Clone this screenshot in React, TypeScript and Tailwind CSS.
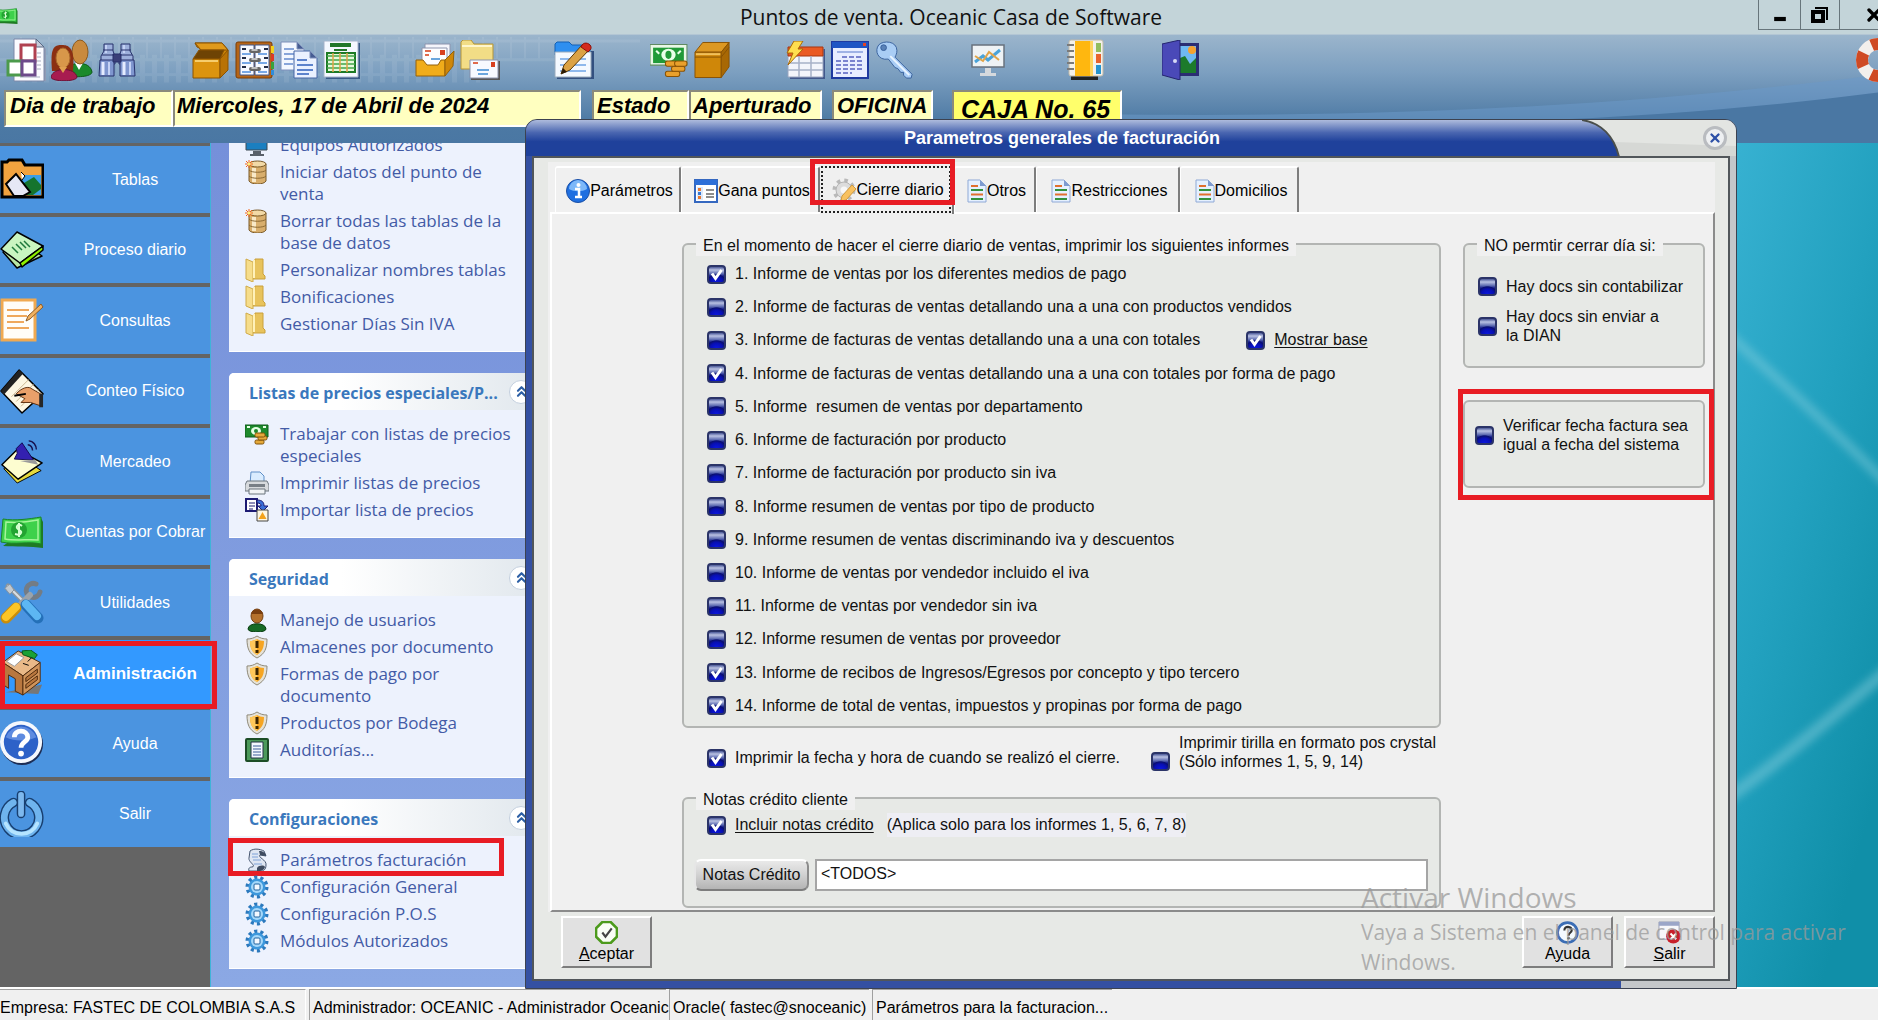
import React from "react";
import { ChevronsUp, Minus, X } from "lucide-react";

type Icon = (p: { className?: string }) => React.ReactElement;

const make = (viewBox: string, body: React.ReactNode): Icon =>
  function Drawn({ className = "" }) {
    return (
      <svg viewBox={viewBox} className={className} aria-hidden="true">
        {body}
      </svg>
    );
  };

/* ---------- toolbar icons ---------- */
const DocBlocks = make("0 0 40 46", (
  <>
    <path d="M10 4h22l8 8v32H10z" fill="#8f9bb5" />
    <path d="M8 2h22l8 8v34H8z" fill="#fbfbff" stroke="#7d88a8" />
    <path d="M30 2l8 8h-8z" fill="#c5cbd9" stroke="#5b6a85" />
    <path d="M31 16h4M31 20h4M31 24h4M31 28h4M31 32h4M14 40h20" stroke="#a9adc0" />
    <rect x="15" y="8" width="14" height="16" fill="#fff" stroke="#b04050" strokeWidth="3" />
    <rect x="2" y="24" width="14" height="14" fill="#fff" stroke="#4c9a4c" strokeWidth="3" />
    <rect x="16" y="24" width="13" height="14" fill="#fff" stroke="#6d4a8a" strokeWidth="3" />
  </>
));
const People = make("0 0 42 42", (
  <>
    <path d="M17 30c1-7 22-9 24 3 0 5-18 6-24 3z" fill="#1b8a2b" stroke="#0d5a18" />
    <path d="M24 24l4 7 4-7z" fill="#fff" />
    <ellipse cx="29" cy="13" rx="8" ry="12" fill="#c98a3e" stroke="#8a5a1f" />
    <path d="M1 32C-1 8 3 6 11 6s13 4 11 26z" fill="#8c2f12" />
    <ellipse cx="12" cy="19" rx="7" ry="10" fill="#d8974a" stroke="#a8672a" />
    <path d="M0 38c2-10 24-10 26 0 0 5-26 5-26 0z" fill="#a81c50" stroke="#6e0f33" />
    <path d="M8 28l4 6 4-6z" fill="#e0a050" />
  </>
));
const Binoculars = make("0 0 38 36", (
  <g stroke="#27316b">
    <path d="M6 2h9v7l2 5v8H3v-8l3-5zM23 2h9v7l3 5v8H21v-8l2-5z" fill="#9db0dc" />
    <path d="M2 18h14v16H1zM22 18h14l1 16H22z" fill="#7f96cf" />
    <path d="M5 20v13M26 20v13" stroke="#e5ecff" strokeWidth="3" />
    <path d="M11 20v13M32 20v13M8 3v8M26 3v8" stroke="#c4d2f5" strokeWidth="2" />
    <path d="M15 12h8v8h-8z" fill="#3a3f78" />
    <path d="M4 13h12M22 13h12M5 8h10M23 8h10" />
  </g>
));
const OpenBox = make("0 0 38 38", (
  <g stroke="#8a5203" strokeLinejoin="round">
    <path d="M3 2h27l6 7-1 20-7 8V17L5 6z" fill="#c98207" />
    <path d="M3 2h27l6 7H9z" fill="#e09a1c" />
    <path d="M7 9h25l-4 9H1z" fill="#6e4304" />
    <path d="M1 18h27v19H1z" fill="#dc940f" />
    <path d="M28 18l8-9v20l-8 8z" fill="#b87205" />
    <path d="M3 20h23" stroke="#f6cd6c" strokeWidth="2" />
  </g>
));
const ClosedBox = make("0 0 38 38", (
  <g stroke="#8a5203" strokeLinejoin="round">
    <path d="M1 11L9 1h27l-8 10z" fill="#dd9822" />
    <path d="M1 11h27v26H1z" fill="#cf8709" />
    <path d="M28 11l8-10v25l-8 11z" fill="#a86804" />
    <path d="M1 16h27l8-10" fill="none" />
    <path d="M2 13h25" stroke="#f1c05c" strokeWidth="2" />
  </g>
));
const Planner = make("0 0 40 38", (
  <>
    <rect x="1" y="1" width="36" height="36" rx="2" fill="#b56416" stroke="#7a3d06" />
    <path d="M36 5h3v7h-3z" fill="#f2d21f" />
    <path d="M36 13h3v7h-3z" fill="#dc3a26" />
    <path d="M36 21h3v7h-3z" fill="#37a23b" />
    <path d="M36 29h3v5h-3z" fill="#2f8ddb" />
    <path d="M5 4h14v30H5zM20 4h14v30H20z" fill="#f7f9ff" stroke="#42598c" />
    <path d="M7 8h4M29 8h4M7 17h4M29 17h4M7 26h4M29 26h4" stroke="#222b44" strokeWidth="2" />
    <path d="M7 13h9M23 13h9M7 22h9M23 22h9M7 31h9M23 31h9" stroke="#78a8e6" strokeWidth="2" />
    <path d="M16 10h8M16 19h8M16 28h8" stroke="#666" strokeWidth="4" strokeLinecap="round" />
    <path d="M17 9h5M17 18h5M17 27h5" stroke="#ddd" strokeWidth="1.500" strokeLinecap="round" />
  </>
));
const CopyDocs = make("0 0 38 38", (
  <g stroke="#7e90bb" strokeLinejoin="round">
    <path d="M1 1h16l7 7v21H1z" fill="#f3f7ff" />
    <path d="M17 1l7 7h-7z" fill="#465c92" />
    <path d="M4 8h10M4 13h12M4 18h10M4 23h9" stroke="#88a5da" strokeWidth="2" />
    <path d="M14 10h16l7 7v20H14z" fill="#eaf1ff" stroke="#4766a5" />
    <path d="M30 10l7 7h-7z" fill="#465c92" />
    <path d="M17 19h10M17 24h16M17 29h16M17 33h12" stroke="#5d83cc" strokeWidth="2" />
  </g>
));
const SheetGreen = make("0 0 36 38", (
  <>
    <path d="M2 2h34v36H2z" fill="#385a86" />
    <path d="M0 0h34v36H0z" fill="#f4f8ff" stroke="#a5b2c9" />
    <path d="M6 4h21" stroke="#22772a" strokeWidth="4" />
    <path d="M10 9h13" stroke="#22772a" strokeWidth="2" />
    <path d="M3 12h28v19H3z" fill="#e6f9dc" stroke="#1d7a25" strokeWidth="2" />
    <path d="M3 15h28M3 19h28M3 23h28M3 27h28" stroke="#43a549" strokeWidth="1.5" />
    <path d="M9 12v19M16 12v19M23 12v19" stroke="#e0a345" strokeWidth="1.5" />
  </>
));
const MailTray = make("0 0 40 34", (
  <>
    <path d="M10 1h25v18H10z" fill="#f5f5fb" stroke="#8d94ad" />
    <path d="M7 5h25v18H7z" fill="#fdfdff" stroke="#8d94ad" />
    <path d="M25 7h5v5h-5z" fill="#d8401f" />
    <path d="M10 8h6M10 12h4" stroke="#e06a4c" strokeWidth="2" />
    <path d="M16 16h9" stroke="#6aa5dd" strokeWidth="2" />
    <path d="M1 17h7l4 5h11l3-5h4v16H1z" fill="#f0ac1a" stroke="#94610a" />
    <path d="M30 17l9-9-1 15-8 10z" fill="#cf8709" stroke="#94610a" />
  </>
));
const FolderMail = make("0 0 40 40", (
  <>
    <path d="M1 2l2-2h8l3 4h19v25H1z" fill="#f2dd86" stroke="#b3953a" />
    <path d="M2 6h30" stroke="#fff6cb" strokeWidth="2" />
    <path d="M11 21h29v19H11z" fill="#555" />
    <path d="M10 20h28v18H10z" fill="#f7f9ff" stroke="#8d94ad" />
    <path d="M31 22h4v5h-4z" fill="#d8401f" />
    <path d="M13 23h5" stroke="#e06a4c" strokeWidth="2" />
    <path d="M17 30h12M18 34h10" stroke="#6aa5dd" strokeWidth="2" />
  </>
));
const FolderPencil = make("0 0 40 38", (
  <>
    <path d="M3 10h37v28H3z" fill="#33507f" />
    <path d="M1 3l2-2h12l3 3h18v10H1z" fill="#2e8ff0" stroke="#1461b4" />
    <path d="M1 11h36v25H1z" fill="#f4f9ff" stroke="#9ab" />
    <path d="M6 18h26M6 24h26M6 30h26" stroke="#8fb9ec" strokeWidth="2" />
    <path d="M28 4l7 5-19 20-9 4 3-9z" fill="#dba244" stroke="#5c3a07" />
    <path d="M7 33l2-6 4 4z" fill="#2b1a05" />
    <path d="M28 4c4-5 12 1 8 5l-2 2-7-5z" fill="#d52a1e" stroke="#8d120a" />
  </>
));
const Money = make("0 0 38 32", (
  <>
    <path d="M0 1h36v20H0z" fill="#e9f7e6" stroke="#5f8a62" />
    <path d="M3 4h30v15H3z" fill="#219a38" />
    <ellipse cx="18" cy="11" rx="7" ry="6" fill="#e9ffe8" />
    <ellipse cx="18" cy="11" rx="3" ry="4" fill="#219a38" />
    <path d="M6 7l3 3M30 7l-3 3" stroke="#e9ffe8" strokeWidth="2" />
    <g fill="#e9a02c" stroke="#8a5203">
      <rect x="15" y="27" width="14" height="5" rx="2" />
      <rect x="21" y="22" width="13" height="5" rx="2" />
      <rect x="15" y="17" width="11" height="5" rx="2" />
      <rect x="24" y="17" width="12" height="5" rx="2" />
    </g>
  </>
));
const TableFlash = make("0 0 40 38", (
  <>
    <path d="M5 8h35v30H5z" fill="#42598c" />
    <path d="M3 6h35v30H3z" fill="#f3f5fb" stroke="#9aa5bf" />
    <path d="M3 6h35v9H3z" fill="#ea5a23" stroke="#a73711" />
    <path d="M3 22h35M3 29h35M14 15v21M26 15v21" stroke="#a7b1c8" strokeWidth="1.5" />
    <path d="M9 0h9l-5 8h5L3 24l5-12H2z" fill="#ffdf4f" stroke="#a8690a" />
  </>
));
const WindowList = make("0 0 38 38", (
  <>
    <path d="M1 1h36v36H1z" fill="#e8edff" stroke="#1f3aa0" strokeWidth="2" />
    <path d="M1 1h36v6H1z" fill="#1f55c4" />
    <path d="M32 2h3v3h-3z" fill="#e04426" />
    <path d="M6 11h26" stroke="#9fb2e5" strokeWidth="2" />
    <path d="M11 16h20M5 20h28M5 24h28M5 28h28M5 32h16" stroke="#7a83cf" strokeWidth="2" strokeDasharray="5 2" />
  </>
));
const KeyIcon = make("0 0 40 40", (
  <g stroke="#38609c" strokeLinejoin="round">
    <path d="M3 4C8-1 22 0 22 10c0 3-1 5-2 7l18 18-1 4h-5l-3-3v-3h-3l-3-4-3-1-7-9C2 21-2 10 3 4z" fill="#a9cdf5" />
    <circle cx="8" cy="7" r="3" fill="#5a82b8" />
    <path d="M15 16l20 20" stroke="#eaf5ff" strokeWidth="2" />
  </g>
));
const MonitorChart = make("0 0 34 32", (
  <>
    <rect x="1" y="1" width="32" height="22" fill="#eef2f5" stroke="#68727d" strokeWidth="1.500" />
    <path d="M4 18l8-6 5 4 12-10" stroke="#4aa3d9" strokeWidth="3" fill="none" />
    <path d="M4 12l8 5 6-9 10 8" stroke="#e2a448" strokeWidth="2" fill="none" />
    <path d="M14 24h6v5h5v3H9v-3h5z" fill="#d5d9dd" />
  </>
));
const NotebookColor = make("0 0 38 42", (
  <>
    <path d="M5 37h27v4H5z" fill="#222" />
    <rect x="3" y="1" width="34" height="36" rx="2" fill="#f4f1ea" stroke="#c0b9a8" />
    <path d="M9 2h18v35H9z" fill="#ffb70f" />
    <path d="M24 2h3v35h-3z" fill="#ffd45c" />
    <path d="M30 4h5v9h-5z" fill="#92bd5e" />
    <path d="M30 15h5v9h-5z" fill="#e8632c" />
    <path d="M30 26h5v9h-5z" fill="#2694ce" />
    <path d="M1 6h7M1 12h7M1 18h7M1 24h7M1 30h7" stroke="#7a7a7a" strokeWidth="2" />
  </>
));
const DoorPicture = make("0 0 38 40", (
  <>
    <path d="M14 3h23v33H14z" fill="#2b2d73" />
    <path d="M18 6h16v27H18z" fill="#6fb8f2" />
    <circle cx="30" cy="10" r="4" fill="#f5a12f" />
    <path d="M18 18l5-2 5 8 6-6v15H18z" fill="#1c7a2b" />
    <path d="M0 4l18-4v40L0 35z" fill="#4a49b8" stroke="#25246f" />
    <circle cx="13" cy="21" r="2" fill="#d6d9f5" />
  </>
));
const Lifebuoy = make("0 0 46 46", (
  <>
    <circle cx="23" cy="23" r="16" fill="none" stroke="#f3efec" strokeWidth="12" />
    <circle cx="23" cy="23" r="16" fill="none" stroke="#cf4a24" strokeWidth="12" strokeDasharray="14 11.13" strokeDashoffset="7" />
  </>
));

/* ---------- sidebar icons ---------- */
const FolderPictures = make("0 0 44 40", (
  <>
    <path d="M2 38V3h5l2-2h13l3 5h18v32z" fill="#f2a33f" stroke="#000" strokeWidth="3" />
    <path d="M22 16h19v20H22z" fill="#3c9ee6" />
    <path d="M22 36l2-12 10-6 7 8v4l-8 6z" fill="#15742d" />
    <path d="M6 25l10-10 14 18-7 4H14z" fill="#e6e8f5" stroke="#000" strokeWidth="2" />
    <path d="M21 13l4 4-3 4" fill="#fff" stroke="#000" />
  </>
));
const Papers = make("0 0 44 38", (
  <g stroke="#000" strokeWidth="1.5" strokeLinejoin="round">
    <path d="M3 21l17-12 22 16-25 12z" fill="#b9e7a4" />
    <path d="M1 18L17 1l26 14-23 17z" fill="#c9f5c0" />
    <path d="M20 32l23-17v4L22 36z" fill="#8ef000" />
    <path d="M12 16l6 6M16 13l6 6M20 11l6 6M24 10l6 6" stroke="#1e7a3c" />
  </g>
));
const NotePencil = make("0 0 44 44", (
  <>
    <path d="M2 2h33v40H2z" fill="#fffdf8" stroke="#f0a951" strokeWidth="3" />
    <path d="M7 12h22M7 18h20M7 24h17M7 30h22" stroke="#efa85c" strokeWidth="2" />
    <path d="M41 6l2 3-13 12-4 2 2-5z" fill="#f0b05f" stroke="#8d5d2a" />
  </>
));
const HandWriting = make("0 0 46 48", (
  <g strokeLinejoin="round">
    <path d="M1 24L20 2l25 25-22 20z" fill="#fdf7e4" stroke="#000" strokeWidth="1.5" />
    <path d="M1 24L20 2l4 4L4 28z" fill="#222" />
    <path d="M12 30l18-18M17 35l18-18M22 40l18-18" stroke="#c8b58e" />
    <path d="M17 27c5-6 12-8 15-6l12 7v12l-12-4H22l4-4z" fill="#e9a06a" stroke="#5c2c0c" />
    <path d="M15 29l12-2" stroke="#000" strokeWidth="2" />
    <path d="M41 27h4v14h-4z" fill="#262626" />
  </g>
));
const Megaphone = make("0 0 44 48", (
  <g strokeLinejoin="round">
    <path d="M3 32l18-12 21 14-25 13z" fill="#e5d93c" stroke="#000" />
    <path d="M1 28l16-16 26 14-25 17z" fill="#fdfdd0" stroke="#000" strokeWidth="1.5" />
    <path d="M22 5l12 18-20-1 3-6-1-5z" fill="#3320b0" stroke="#120a52" />
    <path d="M28 7c3 0 5 3 5 6M29 3c5 0 8 5 8 9" stroke="#17124f" strokeWidth="1.5" fill="none" />
    <path d="M20 24l16-1 3 5z" fill="#9b9b9b" />
  </g>
));
const Banknote = make("0 0 44 32", (
  <>
    <path d="M3 30c12 1 28 0 40 2V6L41 2z" fill="#1f7a23" />
    <path d="M3 3c12 2 26 0 38-2v27c-12-3-26 1-40-2z" fill="#3ed14b" stroke="#1a8527" />
    <path d="M6 6c10 1 22 0 32-2v20c-10-1-22 1-33-1z" fill="none" stroke="#a6f59b" strokeWidth="1.5" />
    <circle cx="19" cy="14" r="8" fill="#22a431" />
    <path d="M22 10c-4-3-7 1-4 3s5 3 1 6l-4-1M19 7v14" stroke="#d5ffd0" strokeWidth="2" fill="none" />
  </>
));
const Tools = make("0 0 44 44", (
  <g strokeLinecap="round">
    <path d="M8 6l20 20" stroke="#8b959e" strokeWidth="5" />
    <path d="M8 6l20 20" stroke="#d9dfe4" strokeWidth="2" />
    <path d="M5 8l5-4 4 6-4 4z" fill="#c3cad0" stroke="#8b959e" />
    <path d="M36 4a7 7 0 1 0 4 8" stroke="#737c85" strokeWidth="5" fill="none" />
    <path d="M30 15L18 27" stroke="#9aa3ab" strokeWidth="6" />
    <path d="M16 28L6 38" stroke="#c98d0b" strokeWidth="11" />
    <path d="M16 27L6 37" stroke="#fcc527" strokeWidth="8" />
    <path d="M26 25l12 13" stroke="#2470b8" strokeWidth="11" />
    <path d="M26 24l11 12" stroke="#5db7f3" strokeWidth="8" />
  </g>
));
const Desk = make("0 0 42 48", (
  <g stroke="#4e2a0d" strokeLinejoin="round">
    <path d="M4 44l34 2 4-10z" fill="#777" stroke="none" />
    <path d="M1 13L17 1l23 12-18 14z" fill="#e9b988" />
    <path d="M1 13l21 14v20l-8-4V30l-7-4v14l-6-4z" fill="#b9773f" />
    <path d="M22 27l18-14v20L22 47z" fill="#cf935a" />
    <path d="M25 29l12-9v4l-12 9zM25 36l12-9v4l-12 9z" fill="#b9773f" />
    <path d="M5 12L15 4l8 4-10 9z" fill="#fff" stroke="#999" />
    <path d="M21 1l9-1 7 5-3 4-12-4z" fill="#1aa136" stroke="#0a571a" />
    <path d="M27 12l4-4M22 14l6 2" stroke="#000" />
  </g>
));
const HelpBig = make("0 0 46 48", (
  <>
    <circle cx="23" cy="25" r="22" fill="#1c2d55" />
    <circle cx="22" cy="23" r="22" fill="#f5f8fd" />
    <circle cx="22" cy="23" r="18" fill="#2d62c8" />
    <path d="M6 18a17 17 0 0 1 32 0c-8 4-22 5-32 0z" fill="#5e8be0" />
    <path d="M15 18c0-9 14-8 14 0 0 5-7 5-7 11" stroke="#fff" strokeWidth="5" fill="none" />
    <circle cx="22" cy="35" r="3" fill="#fff" />
  </>
));
const PowerBig = make("0 0 46 48", (
  <g fill="none" strokeLinecap="round">
    <path d="M14 12a18 18 0 1 0 17 0" stroke="#183f70" strokeWidth="10" />
    <path d="M14 12a18 18 0 1 0 17 0" stroke="#6fb4ee" strokeWidth="7" />
    <path d="M6 34a18 18 0 0 0 33 0" stroke="#b5e4ff" strokeWidth="4" />
    <path d="M22 4v20" stroke="#183f70" strokeWidth="9" />
    <path d="M22 4v20" stroke="#7db8ee" strokeWidth="6" />
  </g>
));

/* ---------- explorer icons ---------- */
const PcSmall = make("0 0 24 24", (
  <>
    <path d="M1 2h21v15H1z" fill="#1b7fc0" stroke="#3c4a55" />
    <path d="M8 18h8v3h3v2H5v-2h3z" fill="#596069" />
  </>
));
const Database = make("0 0 24 24", (
  <>
    <path d="M4 4v17c2 4 15 4 17 0V4z" fill="#d8ae6c" stroke="#7b5a28" />
    <path d="M9 8v14" stroke="#f9e9c7" strokeWidth="4" />
    <ellipse cx="12.500" cy="4" rx="8.500" ry="3" fill="#f2d9a6" stroke="#7b5a28" />
    <path d="M4 10c2 3 15 3 17 0M4 16c2 3 15 3 17 0" stroke="#8d6a33" fill="none" />
    <path d="M4 0v8M0 4h8M1 1l6 6M7 1L1 7" stroke="#f2641c" />
    <circle cx="4" cy="4" r="1.500" fill="#fff27a" />
  </>
));
const FolderOpen = make("0 0 24 24", (
  <>
    <path d="M10 1h8v15l2 2v3H8z" fill="#e8c35c" stroke="#caa03b" />
    <path d="M1 1l7 3v20l-7-3z" fill="#f6dd8b" stroke="#d0ab48" />
    <path d="M9 2v18" stroke="#fff1b9" strokeWidth="2" />
  </>
));
const MoneySmall = make("0 0 24 24", (
  <>
    <path d="M0 3h23v12H0z" fill="#1e8a2c" stroke="#0f5c1a" />
    <ellipse cx="11" cy="9" rx="5" ry="4" fill="#e6ffe4" />
    <ellipse cx="11" cy="9" rx="2" ry="2" fill="#1e8a2c" />
    <path d="M2 5h3M18 5h3" stroke="#e6ffe4" strokeWidth="2" />
    <g fill="#e5a93a" stroke="#805208">
      <rect x="10" y="18" width="9" height="4" rx="1.500" />
      <rect x="13" y="14" width="9" height="4" rx="1.500" />
      <rect x="10" y="11" width="10" height="4" rx="1.500" />
    </g>
  </>
));
const Printer = make("0 0 24 24", (
  <>
    <path d="M6 1h9l4 4v8H5z" fill="#d9ecff" stroke="#5f8fc8" />
    <path d="M2 10h20l2 4v6H0v-6z" fill="#d7dadd" stroke="#6b747c" />
    <path d="M4 13h16v3H4z" fill="#787f86" />
    <path d="M4 18h16v5H4z" fill="#f0f3f5" stroke="#6b747c" />
  </>
));
const ImportDoc = make("0 0 24 24", (
  <>
    <path d="M1 1h11v12H1z" fill="#fff" stroke="#1d1b73" strokeWidth="2" />
    <path d="M4 5h6M4 8h6M4 11h4" stroke="#1d1b73" />
    <path d="M12 2c6 0 7 3 7 6h4l-5 5-5-5h3c0-2-1-3-4-3z" fill="#3a6fd8" stroke="#1d1b73" />
    <path d="M12 12h11v11H12z" fill="#fdf6e0" stroke="#474747" />
    <path d="M17.500 14l4 7h-8z" fill="#f3a21b" />
  </>
));
const UserSmall = make("0 0 24 24", (
  <>
    <path d="M3 21c0-7 18-7 18 0 0 4-18 4-18 0z" fill="#176b25" stroke="#0a3d12" />
    <ellipse cx="12" cy="8" rx="6" ry="7" fill="#b5712c" stroke="#744012" />
    <path d="M6 6c1-6 11-6 12 0z" fill="#7a3f10" />
  </>
));
const Shield = make("0 0 24 24", (
  <>
    <path d="M12 1c3 2 6 3 10 3 0 9-2 15-10 19C4 19 2 13 2 4c4 0 7-1 10-3z" fill="#e5e2d8" stroke="#8f8a7a" />
    <path d="M12 4c2 1 4 2 7 2 0 7-2 11-7 14C7 17 5 13 5 6c3 0 5-1 7-2z" fill="#f6a522" />
    <path d="M12 4v16c-5-3-7-7-7-14 3 0 5-1 7-2z" fill="#ffc75a" />
    <path d="M12 6v7M12 15v3" stroke="#3c2500" strokeWidth="3" />
  </>
));
const Audit = make("0 0 24 24", (
  <>
    <rect x="1" y="1" width="22" height="22" rx="1" fill="#4c9a5a" stroke="#1c4d26" strokeWidth="2" />
    <path d="M6 4h12v16H6z" fill="#f4f8ff" stroke="#234" />
    <path d="M8 8h8M8 11h8M8 14h8M8 17h8" stroke="#3d5d99" />
  </>
));
const Scroll = make("0 0 24 24", (
  <>
    <path d="M5 3c4-3 10-2 14 0l2 5-6-1c-3 2 7 5 6 10 0 5-3 6-5 6H4c-1-3 1-4 3-4 5-1-4-5-3-9z" fill="#dfe6f2" stroke="#465670" />
    <path d="M14 3c4 0 7 2 7 5l-6-1zM12 20c2-3 7-3 8-1-1 4-7 5-8 4z" fill="#3e4b60" />
    <path d="M7 6h6M7 9h6M8 12h8M9 16h8" stroke="#7fa2d8" />
  </>
));
const GearBlue = make("0 0 24 24", (
  <>
    <circle cx="12" cy="12" r="9.500" fill="none" stroke="#2c79bd" strokeWidth="4" strokeDasharray="3 2.970" />
    <circle cx="12" cy="12" r="8.500" fill="#3d98dc" />
    <circle cx="12" cy="12" r="6" fill="#a5d8fa" />
    <rect x="9" y="9" width="6" height="6" rx="1" fill="#f4f9ff" stroke="#1e629f" />
  </>
));

/* ---------- dialog icons ---------- */
const InfoBall = make("0 0 24 24", (
  <>
    <circle cx="12" cy="12" r="11.500" fill="#1f6fe0" stroke="#1b4fa5" />
    <path d="M3 10a9 9 0 0 1 18 0c-5 3-13 3-18 0z" fill="#7db8f9" />
    <path d="M9 10h4v8M9 18h7" stroke="#fff" strokeWidth="2.500" fill="none" />
    <circle cx="12.500" cy="6" r="2" fill="#fff" />
  </>
));
const ListForm = make("0 0 24 24", (
  <>
    <path d="M1 1h22v22H1z" fill="#fff" stroke="#3568c0" strokeWidth="2" />
    <path d="M1 1h22v5H1z" fill="#2d6fd8" />
    <path d="M3 8h6v13H3z" fill="#dbe8fb" />
    <path d="M4 9h3v3H4zM4 17h3v3H4z" fill="#e8772e" />
    <path d="M4 13h3v3H4z" fill="#3a78d0" />
    <path d="M12 11h8M12 15h8M12 18h8" stroke="#8d8d8d" strokeWidth="2" />
  </>
));
const GearPencil = make("0 0 24 24", (
  <>
    <circle cx="12" cy="12" r="9.500" fill="none" stroke="#b9b9b9" strokeWidth="4" strokeDasharray="3.500 3.960" />
    <circle cx="12" cy="12" r="8" fill="#dcdcdc" stroke="#b5b5b5" />
    <circle cx="12" cy="12" r="3.500" fill="#f7f7f7" />
    <path d="M20 7l4 4-10 11-5 1 1-5z" fill="#f8c160" stroke="#d19a3c" />
  </>
));
const PageLines = make("0 0 20 24", (
  <>
    <path d="M1 1h12l6 6v16H1z" fill="#e5f0ff" stroke="#8fa9d6" />
    <path d="M13 1l6 6h-6z" fill="#7e9bd0" />
    <path d="M4 7h7" stroke="#e0702f" strokeWidth="2" />
    <path d="M4 11h12M4 20h12" stroke="#32913c" strokeWidth="2" />
    <path d="M4 15.500h12" stroke="#e0702f" strokeWidth="2" />
  </>
));
const OkMark = make("0 0 22 22", (
  <>
    <path d="M7 1h8l6 6v8l-6 6H7l-6-6V7z" fill="#f9fdf5" stroke="#4c9a1c" strokeWidth="2.500" />
    <path d="M7 11l3 4 6-8" stroke="#444" strokeWidth="2" fill="none" />
  </>
));
const HelpMark = make("0 0 22 22", (
  <>
    <circle cx="11" cy="11" r="9.500" fill="#f4f9ff" stroke="#3b6db5" strokeWidth="2.500" />
    <path d="M8 9c0-5 7-4 7 0 0 2-3 2-3 5" stroke="#333" strokeWidth="2" fill="none" />
    <circle cx="12" cy="16.500" r="1.300" fill="#333" />
  </>
));
const CloseMark = make("0 0 24 24", (
  <>
    <path d="M1 1h21v18H1z" fill="#f7f7fa" stroke="#9a9fb5" />
    <path d="M1 1h21v4H1z" fill="#9ba6c8" />
    <circle cx="16" cy="16" r="7.500" fill="#c8202a" />
    <path d="M13 13l6 6M19 13l-6 6" stroke="#fff" strokeWidth="2" />
  </>
));

/* ---------- data ---------- */
const toolGroups: { ml: string; items: { label: string; I: Icon; cls: string }[] }[] = [
  { ml: "ml-[6px]", items: [
    { label: "Documentos", I: DocBlocks, cls: "h-[46px] w-[40px]" },
    { label: "Clientes", I: People, cls: "h-[42px] w-[42px]" },
    { label: "Buscar", I: Binoculars, cls: "h-[36px] w-[38px]" },
  ] },
  { ml: "ml-[56px]", items: [
    { label: "Inventario", I: OpenBox, cls: "h-[38px] w-[38px]" },
    { label: "Agenda", I: Planner, cls: "h-[38px] w-[40px]" },
    { label: "Copiar", I: CopyDocs, cls: "h-[38px] w-[38px]" },
    { label: "Planilla", I: SheetGreen, cls: "h-[38px] w-[38px]" },
  ] },
  { ml: "ml-[54px]", items: [
    { label: "Bandeja", I: MailTray, cls: "h-[34px] w-[40px]" },
    { label: "Enviar", I: FolderMail, cls: "h-[40px] w-[40px]" },
  ] },
  { ml: "ml-[54px]", items: [{ label: "Editar", I: FolderPencil, cls: "h-[38px] w-[40px]" }] },
  { ml: "ml-[56px]", items: [
    { label: "Pagos", I: Money, cls: "h-[34px] w-[39px]" },
    { label: "Caja", I: ClosedBox, cls: "h-[38px] w-[37px]" },
  ] },
  { ml: "ml-[54px]", items: [
    { label: "Tabla", I: TableFlash, cls: "h-[38px] w-[40px]" },
    { label: "Listado", I: WindowList, cls: "h-[38px] w-[40px]" },
    { label: "Claves", I: KeyIcon, cls: "h-[38px] w-[40px]" },
  ] },
  { ml: "ml-[56px]", items: [{ label: "Estadísticas", I: MonitorChart, cls: "h-[32px] w-[34px]" }] },
  { ml: "ml-[60px]", items: [{ label: "Libreta", I: NotebookColor, cls: "h-[42px] w-[40px]" }] },
  { ml: "ml-[57px]", items: [{ label: "Salir del módulo", I: DoorPicture, cls: "h-[40px] w-[38px]" }] },
];

const nav: { label: string; I: Icon; active?: boolean }[] = [
  { label: "Tablas", I: FolderPictures },
  { label: "Proceso diario", I: Papers },
  { label: "Consultas", I: NotePencil },
  { label: "Conteo Físico", I: HandWriting },
  { label: "Mercadeo", I: Megaphone },
  { label: "Cuentas por Cobrar", I: Banknote },
  { label: "Utilidades", I: Tools },
  { label: "Administración", I: Desk, active: true },
  { label: "Ayuda", I: HelpBig },
  { label: "Salir", I: PowerBig },
];

type Entry = { label: string; I: Icon; marked?: boolean };
const tablesEntries: Entry[] = [
  { label: "Equipos Autorizados", I: PcSmall },
  { label: "Iniciar datos del punto de venta", I: Database },
  { label: "Borrar todas las tablas de la base de datos", I: Database },
  { label: "Personalizar nombres tablas", I: FolderOpen },
  { label: "Bonificaciones", I: FolderOpen },
  { label: "Gestionar Días Sin IVA", I: FolderOpen },
];
const panels: { title: string; entries: Entry[] }[] = [
  { title: "Listas de precios especiales/P...", entries: [
    { label: "Trabajar con listas de precios especiales", I: MoneySmall },
    { label: "Imprimir listas de precios", I: Printer },
    { label: "Importar lista de precios", I: ImportDoc },
  ] },
  { title: "Seguridad", entries: [
    { label: "Manejo de usuarios", I: UserSmall },
    { label: "Almacenes por documento", I: Shield },
    { label: "Formas de pago por documento", I: Shield },
    { label: "Productos por Bodega", I: Shield },
    { label: "Auditorías...", I: Audit },
  ] },
  { title: "Configuraciones", entries: [
    { label: "Parámetros facturación", I: Scroll, marked: true },
    { label: "Configuración General", I: GearBlue },
    { label: "Configuración P.O.S", I: GearBlue },
    { label: "Módulos Autorizados", I: GearBlue },
  ] },
];

const tabs: { label: string; I: Icon; w: string; icon: string; selected?: boolean }[] = [
  { label: "Parámetros", I: InfoBall, w: "w-[126px]", icon: "w-[24px]" },
  { label: "Gana puntos", I: ListForm, w: "w-[139px]", icon: "w-[24px]" },
  { label: "Cierre diario", I: GearPencil, w: "w-[134px]", icon: "w-[24px]", selected: true },
  { label: "Otros", I: PageLines, w: "w-[82px]", icon: "w-[20px]" },
  { label: "Restricciones", I: PageLines, w: "w-[144px]", icon: "w-[20px]" },
  { label: "Domicilios", I: PageLines, w: "w-[119px]", icon: "w-[20px]" },
];

const reports: { label: string; on?: boolean; extra?: boolean }[] = [
  { label: "1. Informe de ventas por los diferentes medios de pago", on: true },
  { label: "2. Informe de facturas de ventas detallando una a una con productos vendidos" },
  { label: "3. Informe de facturas de ventas detallando una a una con totales", extra: true },
  { label: "4. Informe de facturas de ventas detallando una a una con totales por forma de pago", on: true },
  { label: "5. Informe  resumen de ventas por departamento" },
  { label: "6. Informe de facturación por producto" },
  { label: "7. Informe de facturación por producto sin iva" },
  { label: "8. Informe resumen de ventas por tipo de producto" },
  { label: "9. Informe resumen de ventas discriminando iva y descuentos" },
  { label: "10. Informe de ventas por vendedor incluido el iva" },
  { label: "11. Informe de ventas por vendedor sin iva" },
  { label: "12. Informe resumen de ventas por proveedor" },
  { label: "13. Informe de recibos de Ingresos/Egresos por concepto y tipo tercero", on: true },
  { label: "14. Informe de total de ventas, impuestos y propinas por forma de pago", on: true },
];

/* ---------- pieces ---------- */
function Field({ children, className }: { children: React.ReactNode; className: string }) {
  return (
    <div className={`h-[37px] shrink-0 overflow-hidden whitespace-nowrap border-2 border-t-[#8a8a7c] border-l-[#8a8a7c] border-b-white border-r-white font-bold italic text-black ${className}`}>
      {children}
    </div>
  );
}

function Check({ label, on, underline, low }: { label: string; on?: boolean; underline?: boolean; low?: boolean }) {
  return (
    <label className={`flex gap-[9px] ${low ? "items-end" : "items-center"}`}>
      <span className="relative size-[19px] shrink-0">
        <input
          type="checkbox"
          defaultChecked={on}
          className="peer block size-[19px] appearance-none rounded-[4px] border-2 border-[#2b3468] bg-[radial-gradient(10px_8px_at_50%_100%,#0a16e0_0%,#0810b4_60%,#0a0f70_90%,transparent_100%),linear-gradient(#4a5898_0%,#b9c1e2_20%,#5b69b0_45%,#141c88_60%,#0a12c0_100%)]"
        />
        <svg viewBox="0 0 19 19" className="pointer-events-none absolute inset-0 hidden peer-checked:block" aria-hidden="true">
          <path d="M5 8.500l3.500 5L14.500 5" fill="none" stroke="#fff" strokeWidth="3" />
        </svg>
      </span>
      <span className={underline ? "whitespace-nowrap underline underline-offset-2" : "whitespace-pre"}>{label}</span>
    </label>
  );
}

function Entries({ entries }: { entries: Entry[] }) {
  return (
    <ul className="flex flex-col gap-[5px] pr-2 pb-4 pl-4">
      {entries.map((e) => (
        <li key={e.label} className="relative">
          <a href="#" className="flex gap-[11px] text-[17px] leading-[22px] text-[#435ba6]">
            <e.I className="-my-px size-[24px] shrink-0" />
            <span className="w-[232px]">{e.label}</span>
          </a>
          {e.marked && (
            <span className="pointer-events-none absolute -top-[11px] -bottom-[5px] -left-[17px] w-[276px] border-[5px] border-[#e81c24]" />
          )}
        </li>
      ))}
    </ul>
  );
}

const groupBox = "rounded-[6px] border-2 border-[#b3b5b3] bg-[#e7e9e6]";
const legend = "ml-[12px] bg-[#f0f0f0] px-[7px] pt-[4px] leading-[20px]";

function Dialog() {
  return (
    <section
      role="dialog"
      aria-label="Parametros generales de facturación"
      className="absolute top-[119px] right-[141px] bottom-[31px] left-[525px] flex flex-col rounded-t-[12px] border border-[#3c4250] bg-[linear-gradient(90deg,#3450a2_0,#3450a2_1095px,#c4c7ca_1095px)]"
    >
      <header className="relative flex h-[36px] shrink-0 items-center justify-center overflow-hidden rounded-t-[11px] bg-[linear-gradient(#aebbdc,#4a66b0_35%,#1f419b_60%,#1f419b)]">
        <h2 className="pt-px pr-[138px] text-[18px] font-bold text-white">Parametros generales de facturación</h2>
        <svg viewBox="0 0 154 37" className="absolute top-0 right-0 h-[37px] w-[154px]" aria-hidden="true">
          <path d="M0 0C19 3 32 16 37 37H154V0z" fill="#e3e5e2" />
          <path d="M32 22C34 27 36 31 37 37H154V26z" fill="#d6d8d5" />
          <path d="M0 0C19 3 32 16 37 37" fill="none" stroke="#4b4f4b" strokeWidth="2" />
        </svg>
        <button aria-label="Cerrar" className="absolute top-[6px] right-[9px] flex size-[24px] items-center justify-center rounded-full border-[3px] border-[#b9bcc0] bg-[#eef0f2] text-[#2d50a8]">
          <X className="size-[14px]" strokeWidth={4} />
        </button>
      </header>

      <div className="mr-[6px] mb-[7px] ml-[6px] flex flex-1 flex-col border-2 border-[#51565a] bg-[#e7e9e6] pt-[4px] pr-[13px] pb-[11px] pl-[14px]">
        <div className="flex flex-1 flex-col bg-[#f0f0f0] pt-[2px] pl-[2px]">
          <div role="tablist" className="flex h-[48px] items-end pl-[5px]">
            {tabs.map((t) => (
              <button
                key={t.label}
                role="tab"
                aria-selected={!!t.selected}
                className={`relative flex items-center justify-center whitespace-nowrap pl-[4px] text-[16px] text-black ${t.w} ${
                  t.selected
                    ? "z-10 -mb-[2px] h-[49px] border-r-2 border-[#7d7d7d] bg-[#f0f0f0]"
                    : "h-[46px] rounded-t-[3px] border-t-2 border-r-2 border-l border-t-white border-r-[#7d7d7d] border-l-white pt-[2px]"
                }`}
              >
                <t.I className={`h-[24px] shrink-0 ${t.icon}`} />
                {t.label}
                {t.selected && (
                  <>
                    <span className="pointer-events-none absolute inset-x-px inset-y-px border-2 border-dotted border-[#222]" />
                    <span className="pointer-events-none absolute -top-[6px] -right-[3px] bottom-[9px] -left-[10px] border-[5px] border-[#e81c24]" />
                  </>
                )}
              </button>
            ))}
          </div>

          <div role="tabpanel" className="flex flex-1 items-start justify-between border-2 border-t-white border-r-[#8b8b8b] border-b-[#8b8b8b] border-l-white pt-[18px] pr-[8px] pl-[130px] text-[16px] text-[#111]">
            <div className="mr-[22px] flex min-w-0 flex-1 flex-col">
              <fieldset className={groupBox}>
                <legend className={legend}>En el momento de hacer el cierre diario de ventas, imprimir los siguientes informes</legend>
                <div className="flex h-[470px] flex-col justify-between pt-[7px] pb-[9px] pl-[23px]">
                  {reports.map((r) => (
                    <div key={r.label} className="flex h-[22px] items-center gap-[46px]">
                      <Check label={r.label} on={r.on} />
                      {r.extra && <Check label="Mostrar base" on underline />}
                    </div>
                  ))}
                </div>
              </fieldset>

              <div className="flex h-[58px] items-center gap-[31px] pt-[2px] pl-[25px]">
                <Check label="Imprimir la fecha y hora de cuando se realizó el cierre." on />
                <div className="pb-[12px] leading-[19px]">
                  <Check low label={"Imprimir tirilla en formato pos crystal\n(Sólo informes 1, 5, 9, 14)"} />
                </div>
              </div>

              <fieldset className={groupBox}>
                <legend className={legend}>Notas crédito cliente</legend>
                <div className="flex items-center gap-[13px] pt-[3px] pl-[23px]">
                  <Check label="Incluir notas crédito" on underline />
                  <span className="bg-[#eeeef4]">(Aplica solo para los informes 1, 5, 6, 7, 8)</span>
                </div>
                <div className="flex gap-[6px] pt-[22px] pr-[11px] pb-[15px] pl-[10px]">
                  <button className="h-[32px] w-[115px] rounded-[7px] border-2 border-t-white border-r-[#8c8c8c] border-b-[#7d7d7d] border-l-[#e6e6e6] bg-[linear-gradient(#e9e9e9,#d4d4d4_45%,#b4b4b4)]">
                    Notas Crédito
                  </button>
                  <input aria-label="Notas Crédito" defaultValue="<TODOS>" className="h-[32px] min-w-0 flex-1 border-2 border-[#a5a5a5] bg-white px-[4px] pb-[2px]" />
                </div>
              </fieldset>
            </div>

            <div className="flex w-[242px] flex-col">
              <fieldset className={groupBox}>
                <legend className={legend}>NO permtir cerrar día si:</legend>
                <div className="flex h-[110px] flex-col gap-[11px] pt-[21px] pl-[13px] leading-[19px]">
                  <Check label="Hay docs sin contabilizar" />
                  <Check label={"Hay docs sin enviar a\nla DIAN"} />
                </div>
              </fieldset>
              <div className={`relative mt-[32px] h-[88px] pt-[14px] pl-[10px] leading-[19px] ${groupBox}`}>
                <Check label={"Verificar fecha factura sea\nigual a fecha del sistema"} />
                <span className="pointer-events-none absolute -top-[13px] -right-[11px] -bottom-[14px] -left-[7px] border-[5px] border-[#e81c24]" />
              </div>
            </div>
          </div>
        </div>

        <footer className="flex gap-[11px] pt-[4px] pl-[13px] text-[16px]">
          {[
            { first: "", key: "A", rest: "ceptar", I: OkMark },
            { first: "A", key: "y", rest: "uda", I: HelpMark },
            { first: "", key: "S", rest: "alir", I: CloseMark },
          ].map((b, i) => (
            <button
              key={b.rest}
              className={`flex h-[52px] w-[91px] flex-col items-center justify-center border-2 border-t-white border-r-[#7d7d7d] border-b-[#7d7d7d] border-l-white bg-[#e1e1e1] leading-[20px] text-black ${i === 0 ? "mr-auto" : ""}`}
            >
              <b.I className="size-[23px]" />
              <span>{b.first}<u>{b.key}</u>{b.rest}</span>
            </button>
          ))}
        </footer>
      </div>
    </section>
  );
}

export default function App() {
  return (
    <div className="relative flex h-screen flex-col overflow-hidden bg-[#f0f0f0] font-['Liberation_Sans',Arial,sans-serif]">
      <header className="relative flex h-[34px] shrink-0 items-center justify-center bg-[#c3d4d9]">
        <div className="absolute top-[8px] -left-[4px]"><Banknote className="h-[16px] w-[22px]" /></div>
        <h1 className="pt-px pl-[24px] font-['Open_Sans','Noto_Sans',sans-serif] text-[21px] text-[#111]">Puntos de venta. Oceanic Casa de Software</h1>
        <div className="absolute top-0 -right-[18px] flex h-[30px] border-b border-l border-[#67757b] text-black">
          <button aria-label="Minimizar" className="flex w-[42px] items-center justify-center border-r border-[#67757b] pt-[8px]"><Minus className="size-[20px]" strokeWidth={5} strokeLinecap="butt" /></button>
          <button aria-label="Restaurar" className="flex w-[39px] items-center justify-center border-r border-[#67757b]">
            <svg viewBox="0 0 18 18" className="size-[18px]" aria-hidden="true">
              <path d="M4 2h12v12" fill="none" stroke="#000" strokeWidth="2" />
              <path d="M2 6h10v9H2z" fill="none" stroke="#000" strokeWidth="4" />
            </svg>
          </button>
          <button aria-label="Cerrar ventana" className="flex w-[56px] items-center justify-center pl-[12px]"><X className="size-[20px]" strokeWidth={4} /></button>
        </div>
      </header>

      <div className="relative h-[109px] shrink-0 overflow-hidden border-t border-[#b3c6d4] bg-[linear-gradient(#9bb5cc_0%,#7c9fc0_35%,#5d86ad_65%,#4c79a4_80%,#4a77a3_100%)]">
        <svg viewBox="0 0 1878 109" preserveAspectRatio="none" className="absolute inset-0 size-full" aria-hidden="true">
          <g stroke="#fff" opacity="0.08">
            <path d="M0 6h640M0 25h560M0 40h420" strokeWidth="3" />
            <path d="M20 34h460" strokeWidth="28" strokeDasharray="5 7" />
            <path d="M20 14h520" strokeWidth="24" strokeDasharray="2 12" />
          </g>
          <path d="M1100 80C1400 84 1650 70 1878 40V109H1100z" fill="#6b99c9" opacity="0.55" />
          <path d="M1100 90C1450 96 1680 84 1878 58V109H1100z" fill="#4a77a3" />
        </svg>
        <div className="relative mb-[4px] flex h-[50px] items-center">
          {toolGroups.map((g) => (
            <div key={g.items[0].label} className={`flex shrink-0 items-center gap-[5px] ${g.ml}`}>
              {g.items.map((t) => (
                <button key={t.label} aria-label={t.label}><t.I className={t.cls} /></button>
              ))}
            </div>
          ))}
          <button aria-label="Soporte" className="-mr-[23px] ml-auto shrink-0"><Lifebuoy className="h-[46px] w-[46px]" /></button>
        </div>
        <div className="relative flex pt-px pl-[4px] text-[22px] leading-[27px]">
          <Field className="w-[169px] bg-[#ffffc0] pl-[4px]">Dia de trabajo</Field>
          <Field className="w-[408px] bg-[#ffffc0] pl-[2px]">Miercoles, 17 de Abril de 2024</Field>
          <Field className="ml-[11px] w-[97px] bg-[#ffffc0] pl-[3px]">Estado</Field>
          <Field className="w-[133px] bg-[#ffffc0] pl-[2px]">Aperturado</Field>
          <Field className="ml-[10px] w-[101px] bg-[#ffffc0] pl-[3px]">OFICINA</Field>
          <Field className="ml-[19px] w-[170px] bg-[#ffff6b] pt-px pl-[7px] text-[25px] leading-[33px]">CAJA No. 65</Field>
        </div>
      </div>

      <main className="flex min-h-0 flex-1">
        <nav className="z-10 w-[210px] shrink-0 bg-[#646464] pt-[3px]">
          <div className="flex h-[701px] flex-col gap-[4px]">
            {nav.map((n) => (
              <button key={n.label} className={`relative flex w-full flex-1 items-center text-white ${n.active ? "bg-[#3399ff] text-[17px] font-bold" : "bg-[#4b94e0] text-[16px]"}`}>
                <n.I className="h-[46px] w-[44px] shrink-0" />
                <span className="flex-1 pt-px pl-[16px] text-center whitespace-nowrap">{n.label}</span>
                {n.active && <span className="pointer-events-none absolute top-px -right-[7px] -bottom-[3px] left-0 border-[5px] border-[#e81c24]" />}
              </button>
            ))}
          </div>
        </nav>

        <aside className="w-[340px] shrink-0 overflow-hidden border-l border-[#3fb4d8] bg-[linear-gradient(#7590da,#8ba8e4)] pl-[18px] font-['Open_Sans','Noto_Sans',sans-serif]">
          <div className="flex flex-col gap-[21px]">
            <div className="-mt-[9px] border-b border-white bg-[#edf2fd]"><Entries entries={tablesEntries} /></div>
            {panels.map((p) => (
              <div key={p.title} className="rounded-t-[5px] border-b border-white bg-[#edf2fd]">
                <div className="mb-[13px] flex h-[37px] items-center rounded-t-[5px] bg-[linear-gradient(90deg,#fff_35%,#dfe6ec)] pl-[20px]">
                  <h3 className="w-[260px] whitespace-nowrap pt-[3px] text-[16px] font-bold text-[#3a78bd]">{p.title}</h3>
                  <button aria-label={`Contraer ${p.title}`} className="flex size-[24px] shrink-0 items-center justify-center rounded-full border border-[#c3cfde] bg-white text-[#2c5fa5]">
                    <ChevronsUp className="size-[17px]" strokeWidth={3} />
                  </button>
                </div>
                <Entries entries={p.entries} />
              </div>
            ))}
          </div>
        </aside>

        <div className="relative flex-1 bg-[#1e9fba]">
          <svg viewBox="0 0 141 843" preserveAspectRatio="none" className="absolute top-0 right-0 h-full w-[141px]" aria-hidden="true">
            <defs>
              <linearGradient id="desk" x1="0" y1="0" x2="0.600" y2="1">
                <stop offset="0" stopColor="#37b1d1" />
                <stop offset="0.500" stopColor="#22a1bf" />
                <stop offset="1" stopColor="#108fa8" />
              </linearGradient>
              <filter id="soft"><feGaussianBlur stdDeviation="4" /></filter>
            </defs>
            <path d="M0 0h141v843H0z" fill="url(#desk)" />
            <g filter="url(#soft)" stroke="#8fd3e0" fill="none" opacity="0.450">
              <path d="M-10 190C40 235 90 280 160 350" strokeWidth="9" />
              <path d="M-20 662C40 620 100 570 170 510" strokeWidth="12" />
            </g>
          </svg>
        </div>
      </main>

      <footer className="flex h-[33px] shrink-0 gap-[3px] border-t-2 border-white bg-[#f0f0f0] text-[16px] leading-[36px] whitespace-nowrap text-black">
        <div className="w-[306px] border-t border-r border-t-[#a0a0a0] border-r-white">Empresa: FASTEC DE COLOMBIA S.A.S</div>
        <div className="w-[357px] border-t border-l border-[#a0a0a0] pl-[3px]">Administrador: OCEANIC - Administrador Oceanic</div>
        <div className="w-[200px] border-t border-l border-[#a0a0a0] pl-[3px]">Oracle( fastec@snoceanic)</div>
        <div className="w-[240px] border-t border-l border-[#a0a0a0] pl-[3px]">Parámetros para la facturacion...</div>
      </footer>

      <Dialog />

      <div className="pointer-events-none absolute right-[20px] bottom-[43px] w-[497px] font-['Open_Sans','Noto_Sans',sans-serif] text-[#9a9a9a]/75">
        <p className="text-[28px] leading-[40px]">Activar Windows</p>
        <p className="text-[21px] leading-[30px]">Vaya a Sistema en el panel de control para activar Windows.</p>
      </div>
    </div>
  );
}
